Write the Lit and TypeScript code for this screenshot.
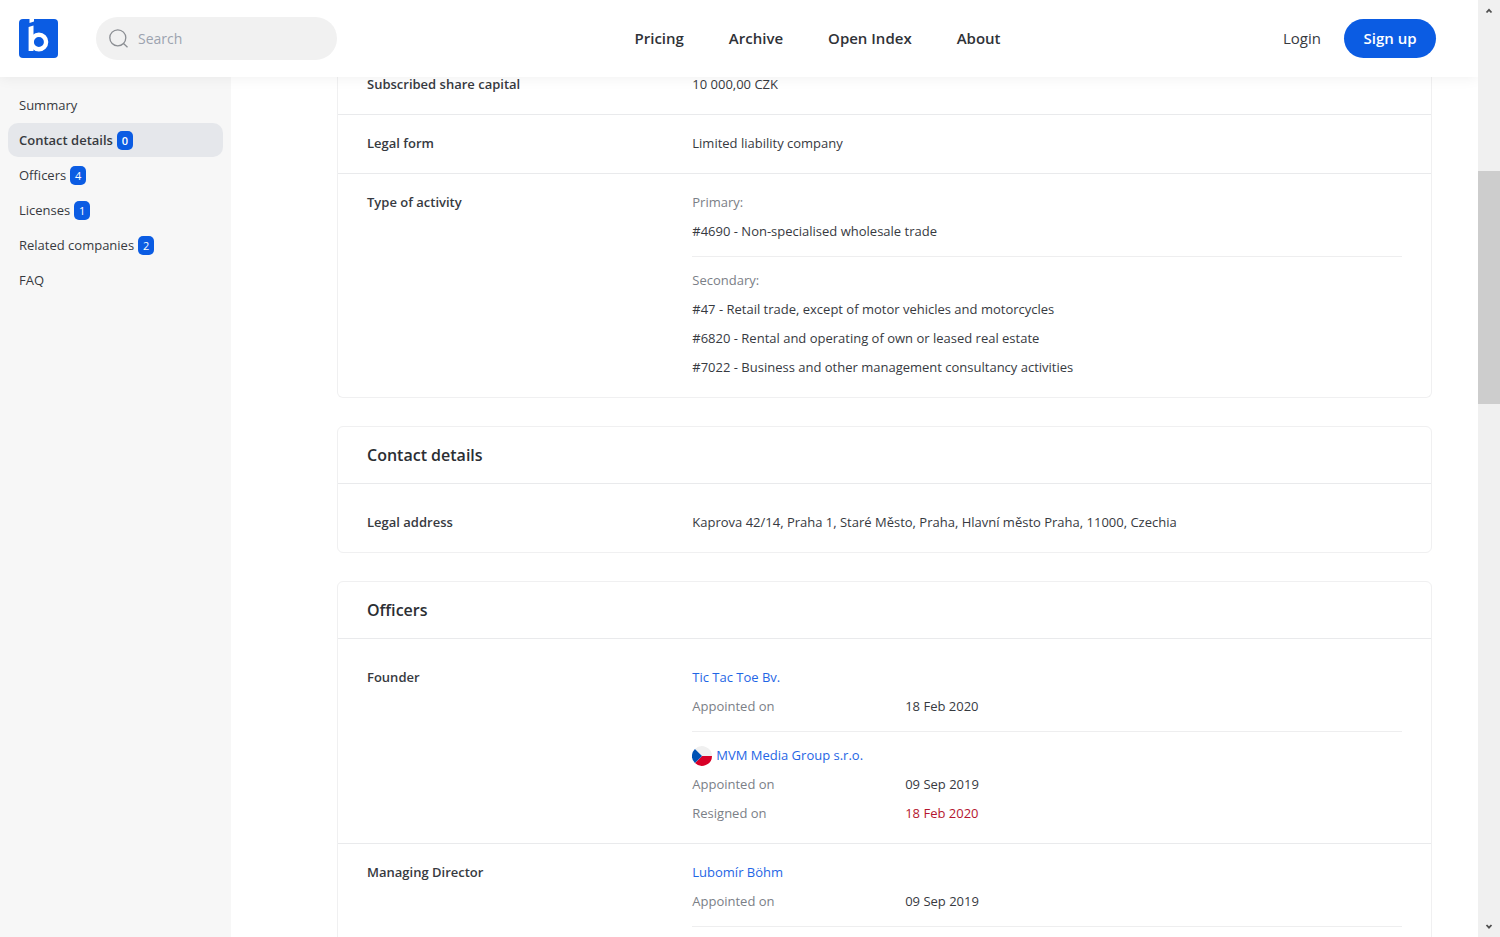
import { LitElement, html, css, svg, nothing } from "lit";
import { customElement } from "lit/decorators.js";
import { classMap } from "lit/directives/class-map.js";

interface Section { label: string; count?: number; active?: boolean }
interface Officer { name: string; flag?: boolean; appointed: string; resigned?: string }

const sections: Section[] = [
  { label: "Summary" },
  { label: "Contact details", count: 0, active: true },
  { label: "Officers", count: 4 },
  { label: "Licenses", count: 1 },
  { label: "Related companies", count: 2 },
  { label: "FAQ" },
];

const links = ["Pricing", "Archive", "Open Index", "About"];

const secondary = [
  "#47 - Retail trade, except of motor vehicles and motorcycles",
  "#6820 - Rental and operating of own or leased real estate",
  "#7022 - Business and other management consultancy activities",
];

const officers: { role: string; people: Officer[]; more?: boolean }[] = [
  {
    role: "Founder",
    people: [
      { name: "Tic Tac Toe Bv.", appointed: "18 Feb 2020" },
      { name: "MVM Media Group s.r.o.", flag: true, appointed: "09 Sep 2019", resigned: "18 Feb 2020" },
    ],
  },
  { role: "Managing Director", more: true, people: [{ name: "Lubomír Böhm", appointed: "09 Sep 2019" }] },
];

const logo = svg`<svg class="logo" viewBox="0 0 39 39" aria-hidden="true">
  <rect width="39" height="39" rx="4" fill="#0b5ce3"/>
  <path d="M10.5 0h4.5v2.6l-4.5 1.4z" fill="#fff"/>
  <path d="M9.6 8l4.9-1.6V32H9.6z" fill="#fff"/>
  <circle cx="19.9" cy="23" r="7.2" fill="none" stroke="#fff" stroke-width="4.4"/>
</svg>`;

const flag = svg`<svg class="flag" viewBox="0 0 20 20" aria-hidden="true">
  <path d="M3 3A10 10 0 0 1 20 10H10z" fill="#f0f0f0"/>
  <path d="M3 17A10 10 0 0 0 20 10H10z" fill="#d80027"/>
  <path d="M2.9 2.9a10 10 0 0 0 0 14.2L10 10z" fill="#0052b4"/>
</svg>`;

@customElement("app-root")
export class AppRoot extends LitElement {
  static styles = css`
    :host {
      display: block;
      height: 100vh;
      overflow: hidden;
      background: #fff;
      color: #373a3f;
      font: 13px/29px "Open Sans", "Noto Sans", sans-serif;
    }
    * { box-sizing: border-box; }
    a { color: inherit; text-decoration: none; }
    .shell { display: grid; grid-template-columns: minmax(0, 1fr) 22px; height: 100%; }
    .page { display: flex; flex-direction: column; min-height: 0; overflow: hidden; }
    .top {
      position: relative;
      z-index: 1;
      display: flex;
      align-items: center;
      flex: none;
      height: 77px;
      padding: 0 42px 0 19px;
      background: #fff;
      box-shadow: 0 0 14px rgba(0, 0, 0, 0.07);
      font-size: 15px;
    }
    .logo { display: block; width: 39px; height: 39px; }
    .search {
      display: flex;
      align-items: center;
      gap: 10px;
      width: 241px;
      height: 43px;
      margin-left: 38px;
      padding: 0 13px;
      border-radius: 22px;
      background: #f1f1f1;
    }
    .search svg { flex: none; width: 19px; height: 19px; }
    .search input {
      flex: 1;
      min-width: 0;
      border: 0;
      outline: 0;
      padding: 0;
      background: none;
      color: inherit;
      font: inherit;
      font-size: 14px;
    }
    .search input::placeholder { color: #9ca3af; opacity: 1; }
    .menu { display: flex; flex: 1; justify-content: center; gap: 45px; padding-left: 15px; font-weight: 600; color: #2f3237; }
    .login { margin-right: 23px; font-weight: 500; }
    .signup {
      height: 39px;
      width: 92px;
      padding: 0;
      border: 0;
      border-radius: 20px;
      background: #0b5ce3;
      color: #fff;
      font: inherit;
      font-weight: 600;
    }
    .body { display: grid; grid-template-columns: 231px minmax(0, 1fr); flex: 1; min-height: 0; }
    .side { display: flex; flex-direction: column; gap: 1px; padding: 11px 8px; background: #f7f7f7; }
    .item {
      display: flex;
      align-items: center;
      gap: 4px;
      height: 34px;
      padding: 0 11px;
      border-radius: 10px;
    }
    .item.active { background: #e5e7eb; font-weight: 600; }
    .badge {
      width: 16px;
      height: 19px;
      border-radius: 5px;
      background: #0b5ce3;
      color: #fff;
      font-size: 11px;
      line-height: 20px;
      text-align: center;
    }
    .main { display: flex; flex-direction: column; gap: 28px; margin-top: -21px; padding: 0 46px 0 106px; }
    .card { flex: none; border: 1px solid #f0f0f1; border-radius: 6px; }
    .card.cut { border-top: 0; }
    .title { margin: 0; padding: 14px 29px; color: #2b2e33; font-size: 16px; line-height: 28px; font-weight: 600; }
    .row {
      display: grid;
      grid-template-columns: 11fr 24fr;
      padding: 14px 29px 15px;
    }
    .row + .row, .title + .row { border-top: 1px solid #e9eaec; }
    .title + .row { padding-top: 24px; }
    .label { font-weight: 600; }
    .muted { color: #7b8087; }
    .group + .group { margin-top: 10px; padding-top: 9px; border-top: 1px solid #eeeeef; }
    .who { display: flex; align-items: center; gap: 4px; color: #1f66e5; }
    .flag { width: 20px; height: 20px; }
    .pair { display: grid; grid-template-columns: 3fr 7fr; }
    .gone { color: #b5162f; }
    .scroll { display: flex; flex-direction: column; align-items: center; background: #f0f0f0; }
    .scroll svg { width: 22px; height: 22px; }
    .before { flex: 149; }
    .thumb { flex: 233; width: 100%; background: #cdcdcd; }
    .after { flex: 511; }
  `;

  private row(label: string, value: unknown) {
    return html`<div class="row"><div class="label">${label}</div><div>${value}</div></div>`;
  }

  private officer(o: Officer) {
    return html`<div class="group">
      <a class="who" href="#">${o.flag ? flag : nothing}<span>${o.name}</span></a>
      <div class="pair"><span class="muted">Appointed on</span><span>${o.appointed}</span></div>
      ${o.resigned
        ? html`<div class="pair"><span class="muted">Resigned on</span><span class="gone">${o.resigned}</span></div>`
        : nothing}
    </div>`;
  }

  render() {
    return html`<div class="shell">
      <div class="page">
        <header class="top">
          <a href="#" aria-label="Home">${logo}</a>
          <label class="search">
            <svg viewBox="0 0 19 19" fill="none" stroke="#8b8e93" stroke-width="1.3" aria-hidden="true">
              <circle cx="8.8" cy="8.8" r="8" /><path d="M14.5 14.5l4 3.8" />
            </svg>
            <input type="search" placeholder="Search" aria-label="Search" />
          </label>
          <nav class="menu">${links.map((l) => html`<a href="#">${l}</a>`)}</nav>
          <a class="login" href="#">Login</a>
          <button class="signup">Sign up</button>
        </header>
        <div class="body">
          <nav class="side">
            ${sections.map((s) => html`<a href="#" class=${classMap({ item: true, active: !!s.active })}>
              <span>${s.label}</span>${s.count === undefined ? nothing : html`<span class="badge">${s.count}</span>`}
            </a>`)}
          </nav>
          <main class="main">
            <section class="card cut">
              ${this.row("Subscribed share capital", "10 000,00 CZK")}
              ${this.row("Legal form", "Limited liability company")}
              ${this.row("Type of activity", html`
                <div class="group"><div class="muted">Primary:</div><div>#4690 - Non-specialised wholesale trade</div></div>
                <div class="group"><div class="muted">Secondary:</div>${secondary.map((t) => html`<div>${t}</div>`)}</div>
              `)}
            </section>
            <section class="card">
              <h2 class="title">Contact details</h2>
              ${this.row("Legal address", "Kaprova 42/14, Praha 1, Staré Město, Praha, Hlavní město Praha, 11000, Czechia")}
            </section>
            <section class="card">
              <h2 class="title">Officers</h2>
              ${officers.map((g) => this.row(g.role, html`${g.people.map((o) => this.officer(o))}${g.more ? html`<div class="group"></div>` : nothing}`))}
            </section>
          </main>
        </div>
      </div>
      <div class="scroll" aria-hidden="true">
        <svg viewBox="0 0 22 22" fill="none" stroke="#505050" stroke-width="1.8"><path d="M8.5 12.5l2.5-2.7 2.5 2.7" /></svg>
        <div class="before"></div><div class="thumb"></div><div class="after"></div>
        <svg viewBox="0 0 22 22" fill="none" stroke="#505050" stroke-width="1.8"><path d="M8.5 10l2.5 2.7 2.5-2.7" /></svg>
      </div>
    </div>`;
  }
}
